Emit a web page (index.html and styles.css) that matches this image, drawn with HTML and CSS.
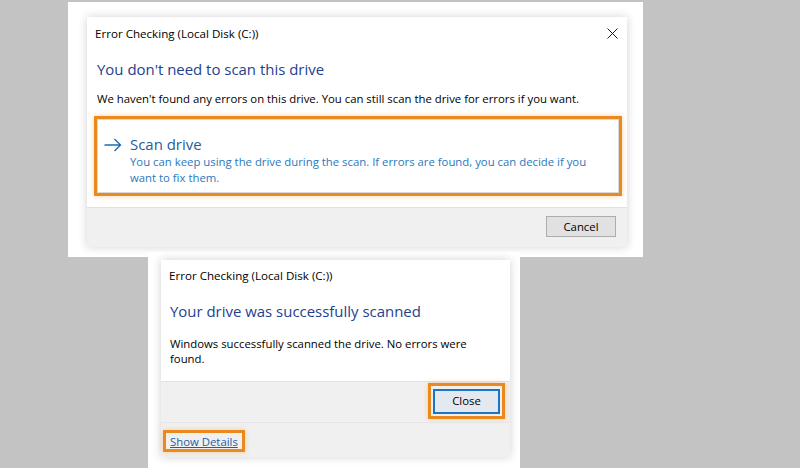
FILE: index.html
```html
<!DOCTYPE html>
<html lang="en">
<head>
<meta charset="utf-8">
<title>Error Checking</title>
<link rel="stylesheet" href="styles.css">
</head>
<body>
<div class="canvas">
  <section class="shot shot-1">
    <div class="dialog dialog-1">
      <div class="content content-1">
        <div class="titlebar">
          <span class="title">Error Checking (Local Disk (C:))</span>
          <svg class="close-x" width="11" height="11" viewBox="0 0 11 11" aria-hidden="true"><path d="M0.5 0.5 L10.5 10.5 M10.5 0.5 L0.5 10.5" stroke="#1a1a1a" stroke-width="1" fill="none"/></svg>
        </div>
        <h1 class="main">You don't need to scan this drive</h1>
        <p class="body-text">We haven't found any errors on this drive. You can still scan the drive for errors if you want.</p>
        <div class="mark cmd-mark">
          <div class="cmd">
            <svg class="arrow" width="18" height="14" viewBox="0 0 18 14" aria-hidden="true"><path d="M0.5 7 H16.5 M10.5 1 L16.5 7 L10.5 13" stroke="#1f6db1" stroke-width="1.4" fill="none"/></svg>
            <div class="cmd-text">
              <div class="cmd-title">Scan drive</div>
              <div class="cmd-desc">You can keep using the drive during the scan. If errors are found, you can decide if you want to fix them.</div>
            </div>
          </div>
        </div>
      </div>
      <div class="footer footer-1">
        <button class="btn">Cancel</button>
      </div>
    </div>
  </section>
  <section class="shot shot-2">
    <div class="dialog dialog-2">
      <div class="content content-2">
        <div class="titlebar titlebar-2">
          <span class="title">Error Checking (Local Disk (C:))</span>
        </div>
        <h1 class="main main-2">Your drive was successfully scanned</h1>
        <p class="body-text body-2">Windows successfully scanned the drive. No errors were<br>found.</p>
      </div>
      <div class="footer footer-2">
        <div class="mark close-mark">
          <button class="btn btn-default">Close</button>
        </div>
      </div>
      <div class="details">
        <div class="mark details-mark"><a class="link" href="#">Show Details</a></div>
      </div>
    </div>
  </section>
</div>
</body>
</html>
```
FILE: styles.css
```css
* { box-sizing: border-box; }
html, body { margin: 0; padding: 0; }
body {
  background: #c3c3c3;
  font-family: "Open Sans", "Noto Sans", sans-serif;
  color: #000;
  width: 800px;
  height: 468px;
  overflow: hidden;
}
.canvas {
  display: flex;
  flex-direction: column;
  align-items: flex-start;
  padding-top: 2px;
}
.shot {
  background: #fff;
  display: flex;
}
.shot-1 {
  margin-left: 68px;
  width: 575px;
  height: 255px;
  padding: 15px 16px 0 19px;
}
.shot-2 {
  position: relative;
  margin-left: 148px;
  margin-top: -5px;
  width: 372px;
  height: 216px;
  padding: 8px 10px 0 13px;
}
.dialog {
  background: #f0f0f0;
  box-shadow: 0 0 9px rgba(0,0,0,0.18);
  display: flex;
  flex-direction: column;
}
.dialog-1 { width: 540px; height: 230px; }
.dialog-2 { width: 349px; height: 197px; }
.content {
  background: #fff;
  display: flex;
  flex-direction: column;
}
.content-1 { height: 190px; padding: 0 5px 0 7px; }
.content-2 { height: 121px; padding: 0 8px; }
.titlebar {
  height: 32px;
  display: flex;
  align-items: center;
  justify-content: space-between;
  padding-left: 1px;
  padding-right: 4px;
}
.titlebar-2 { height: 30px; padding-left: 0; }
.title {
  font-size: 11.6px;
  color: #000;
}
.close-x { display: block; }
.main {
  margin: 9px 0 0 3px;
  font-size: 14.95px;
  font-weight: 400;
  line-height: 22px;
  color: #1d4290;
}
.main-2 { margin: 10px 0 0 1px; }
.body-text {
  margin: 11px 0 0 3px;
  font-size: 11.35px;
  line-height: 16px;
  color: #000;
}
.body-2 { margin: 14px 0 0 1px; line-height: 15px; }
.mark {
  border: 3px solid #ea8a1e;
  box-shadow: 0 0 5px rgba(245,160,70,0.45);
}
.cmd-mark {
  margin-top: 9px;
  height: 80px;
  background: #fff;
}
.cmd {
  height: 100%;
  border: 1px solid #d9d9d9;
  display: flex;
  align-items: flex-start;
  padding: 15px 0 0 6px;
  gap: 8px;
}
.arrow { flex: none; margin-top: 3px; }
.cmd-title {
  font-size: 14.95px;
  line-height: 19px;
  color: #1e609c;
}
.cmd-desc {
  font-size: 11.35px;
  line-height: 16px;
  color: #2a78bd;
  width: 462px;
}
.footer {
  display: flex;
  justify-content: flex-end;
  border-top: 1px solid #e2e2e2;
}
.footer-1 { height: 40px; padding: 8px 11px 0 0; align-items: flex-start; }
.footer-2 { height: 41px; padding: 1px 5px 0 0; align-items: flex-start; }
.btn {
  font-family: "Open Sans", "Noto Sans", sans-serif;
  font-size: 11.35px;
  color: #000;
  background: #e1e1e1;
  border: 1px solid #adadad;
  width: 70px;
  height: 21px;
  padding: 0;
  line-height: 18px;
}
.close-mark { padding: 2px; }
.btn-default {
  width: 67px;
  height: 25px;
  border: 2px solid #1b74c4;
  background: #e3e9ef;
}
.details {
  height: 35px;
  border-top: 1px solid #e6e6e6;
  padding: 7px 0 0 2px;
  display: flex;
  align-items: flex-start;
}
.details-mark {
  height: 22px;
  padding: 0 4px 0 4px;
  display: flex;
  align-items: center;
}
.link {
  font-size: 11.35px;
  color: #1f5ea6;
  text-decoration: underline;
}
```
